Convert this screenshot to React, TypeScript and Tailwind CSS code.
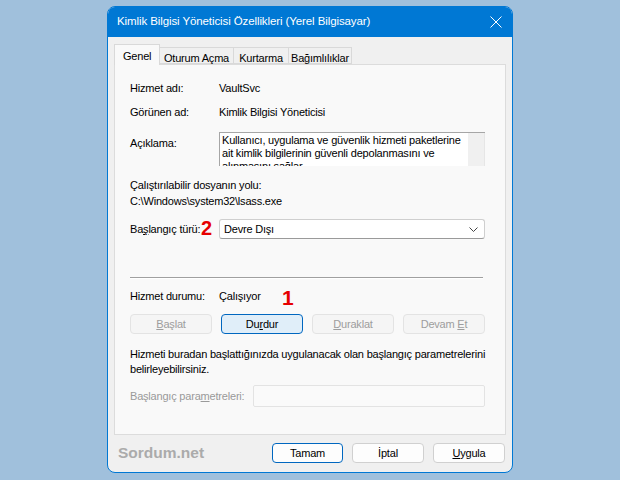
import React from 'react';

const font = "font-['Liberation_Sans',Arial,sans-serif]";

function Btn({
  children,
  kind = 'normal',
  className = '',
}: {
  children: React.ReactNode;
  kind?: 'normal' | 'disabled' | 'focus' | 'default';
  className?: string;
}) {
  const styles = {
    normal: 'bg-[#fdfdfd] border-[#d0d0d0] text-black',
    disabled: 'bg-[#f5f5f5] border-[#e3e3e3] text-[#9d9d9d]',
    focus: 'bg-[#e0eef9] border-[#0067c0] text-black',
    default: 'bg-[#fdfdfd] border-[#0067c0] text-black',
  }[kind];
  return (
    <div
      className={`h-[20px] flex items-center justify-center rounded-[4px] border ${styles} ${className}`}
    >
      <span>{children}</span>
    </div>
  );
}

export default function App() {
  return (
    <div className={`w-[620px] h-[480px] bg-[#a0c0dc] pt-[6px] pl-[107px] ${font} text-[11px] tracking-[-0.2px] text-black`}>
      <div className="w-[406px] h-[467px] rounded-[8px] border border-[#0078d4] bg-[#f0f0f0] overflow-hidden flex flex-col">
        {/* Title bar */}
        <div className="h-[30px] bg-[#0078d4] flex items-center justify-between pl-[9px] pr-[10px] text-white text-[11.5px]">
          <span className="tracking-[-0.1px]">Kimlik Bilgisi Yöneticisi Özellikleri (Yerel Bilgisayar)</span>
          <svg width="12" height="12" viewBox="0 0 12 12">
            <path d="M0.5 0.5 L11.5 11.5 M11.5 0.5 L0.5 11.5" stroke="white" strokeWidth="1" fill="none" />
          </svg>
        </div>

        <div className="px-[6px] pt-[7px]">
          {/* Tabs */}
          <div className="flex items-end h-[20px] relative z-10 whitespace-nowrap">
            <div className="h-[21px] -mb-[1px] px-[8px] pt-[3px] border border-b-0 border-[#d9d9d9] bg-[#f9f9f9] w-[46px]">
              Genel
            </div>
            <div className="h-[17px] pt-[2px] border border-l-0 border-[#d9d9d9] bg-[#f0f0f0] w-[74px] text-center">
              Oturum Açma
            </div>
            <div className="h-[17px] pt-[2px] border border-l-0 border-[#d9d9d9] bg-[#f0f0f0] w-[55px] text-center">
              Kurtarma
            </div>
            <div className="h-[17px] pt-[2px] border border-l-0 border-[#d9d9d9] bg-[#f0f0f0] w-[63px] text-center">
              Bağımlılıklar
            </div>
          </div>

          {/* Panel */}
          <div className="h-[371px] border border-[#dcdcdc] bg-[#f9f9f9] pl-[15px] pr-[18px] pt-[15px] leading-[16px]">
            <div className="flex h-[16px]">
              <div className="w-[89px]">Hizmet adı:</div>
              <div>VaultSvc</div>
            </div>
            <div className="flex h-[16px] mt-[8px]">
              <div className="w-[89px]">Görünen ad:</div>
              <div>Kimlik Bilgisi Yöneticisi</div>
            </div>

            <div className="flex mt-[12px]">
              <div className="w-[89px] pt-[3px]">Açıklama:</div>
              <div className="w-[266px] h-[34px] flex border-t border-l border-[#a6a6a6] bg-white overflow-hidden">
                <div className="flex-1 pl-[2px] pt-[1px] leading-[13px] overflow-hidden">
                  Kullanıcı, uygulama ve güvenlik hizmeti paketlerine ait kimlik bilgilerinin güvenli depolanmasını ve alınmasını sağlar.
                </div>
                <div className="w-[17px] bg-[#f0f0f0] border-r border-[#e6e6e6]" />
              </div>
            </div>

            <div className="mt-[11px]">Çalıştırılabilir dosyanın yolu:</div>
            <div>C:\Windows\system32\lsass.exe</div>

            <div className="flex items-center mt-[10px] relative">
              <div className="w-[89px]">
                Ba<u>ş</u>langıç türü:
              </div>
              <span className="absolute left-[71px] top-[-3px] text-[20px] font-bold text-[#e60000] leading-[24px] tracking-normal">
                2
              </span>
              <div className="w-[266px] h-[20px] flex items-center justify-between border border-[#cfcfcf] border-b-[#9a9a9a] rounded-[3px] bg-white pl-[4px] pr-[6px]">
                <span>Devre Dışı</span>
                <svg width="9" height="5" viewBox="0 0 9 5">
                  <path d="M0.5 0.5 L4.5 4.5 L8.5 0.5" stroke="#444" strokeWidth="1" fill="none" />
                </svg>
              </div>
            </div>

            <div className="mt-[38px] w-[353px] h-[2px] border-t border-[#a0a0a0] border-b border-b-white" />

            <div className="flex h-[16px] mt-[9px] relative">
              <div className="w-[89px]">Hizmet durumu:</div>
              <div>Çalışıyor</div>
              <span className="absolute left-[152px] top-[-2px] text-[21px] font-bold text-[#e60000] leading-[24px] tracking-normal">
                1
              </span>
            </div>

            <div className="grid grid-cols-4 gap-[9px] w-[355px] mt-[10px]">
              <Btn kind="disabled">
                <u>B</u>aşlat
              </Btn>
              <Btn kind="focus">
                Du<u>r</u>dur
              </Btn>
              <Btn kind="disabled">
                <u>D</u>uraklat
              </Btn>
              <Btn kind="disabled">
                Devam <u>E</u>t
              </Btn>
            </div>

            <div className="mt-[13px] leading-[15px] w-[360px]">
              Hizmeti buradan başlattığınızda uygulanacak olan başlangıç parametrelerini belirleyebilirsiniz.
            </div>

            <div className="flex items-center mt-[8px]">
              <div className="w-[123px] text-[#9a9a9a]">
                Başlangıç para<u>m</u>etreleri:
              </div>
              <div className="w-[232px] h-[22px] border border-[#e3e3e3] bg-[#fafafa] rounded-[2px]" />
            </div>
          </div>

          {/* Bottom buttons */}
          <div className="flex items-center mt-[8px] h-[20px]">
            <div className="pl-[4px] text-[15.5px] font-bold text-[#ababab] tracking-normal flex-1">Sordum.net</div>
            <div className="flex gap-[9px] mr-[1px]">
              <Btn kind="default" className="w-[71px]">Tamam</Btn>
              <Btn className="w-[72px]">İptal</Btn>
              <Btn className="w-[72px]">
                <u>U</u>ygula
              </Btn>
            </div>
          </div>
        </div>
      </div>
    </div>
  );
}
